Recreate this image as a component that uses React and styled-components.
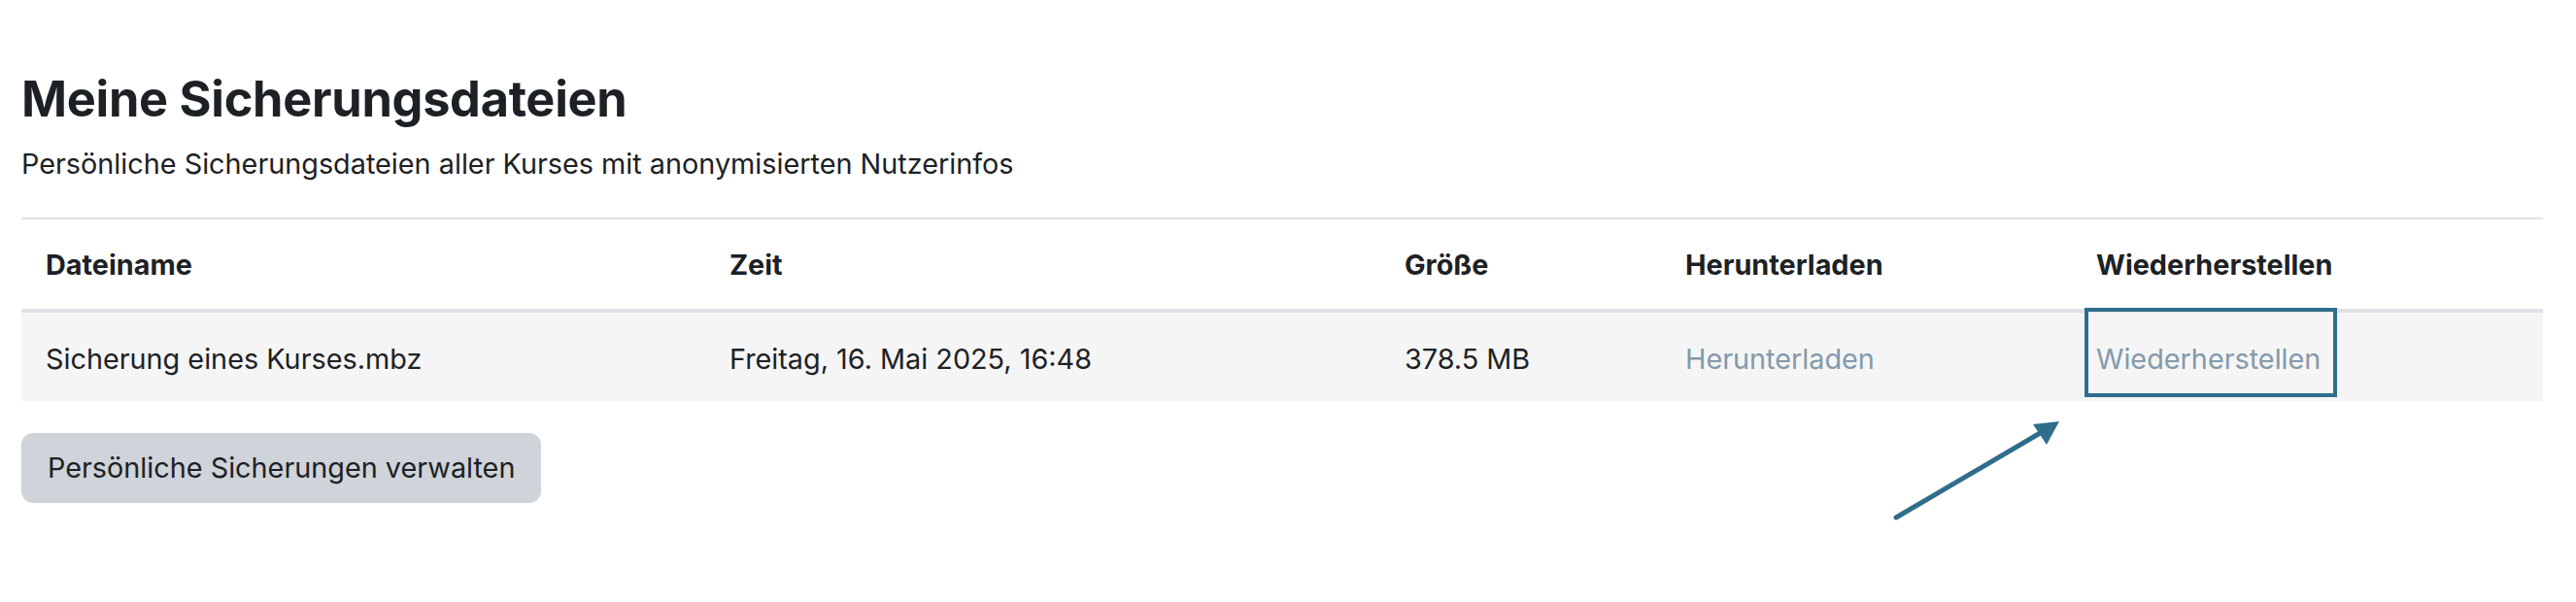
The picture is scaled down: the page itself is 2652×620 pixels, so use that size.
import React from "react";
import styled, { createGlobalStyle } from "styled-components";

const GlobalStyle = createGlobalStyle`
  body {
    margin: 0;
    background: #fff;
    font-family: Inter, "Noto Sans", "Liberation Sans", sans-serif;
    color: #1d2125;
  }
`;

const Page = styled.div`
  position: relative;
  padding: 72px 34px 0 22px;
  height: 620px;
  box-sizing: border-box;
`;

const Title = styled.h2`
  margin: 0 0 15px;
  font-size: 50.5px;
  line-height: 1.2;
  font-weight: 700;
  letter-spacing: -0.3px;
`;

const Subtitle = styled.p`
  margin: 0 0 34px;
  font-size: 28.8px;
  line-height: 42px;
`;

const Table = styled.table`
  width: 100%;
  border-collapse: collapse;
  table-layout: fixed;
  border-top: 2px solid #dee2e6;
  font-size: 28.8px;
  line-height: 42px;
`;

const Th = styled.th`
  width: ${({ $w }) => $w - 50}px;
  text-align: left;
  font-weight: 700;
  padding: 26px 25px 24px;
  border-bottom: 4px solid #dee2e6;
`;

const Row = styled.tr`
  background: #f5f5f5;
`;

const Td = styled.td`
  position: relative;
  padding: 27px 25px 22px;
  white-space: nowrap;
`;

const Link = styled.a`
  color: #8399ab;
  text-decoration: none;
`;

const Highlight = styled.span`
  position: absolute;
  left: 13px;
  top: -5px;
  width: 260px;
  height: 92px;
  box-sizing: border-box;
  border: 4px solid #306d8c;
  pointer-events: none;
`;

const Button = styled.button`
  margin-top: 33px;
  padding: 15px 27px;
  border: none;
  border-radius: 12px;
  background: #ced4da;
  color: #1d2125;
  font-family: inherit;
  font-size: 28.8px;
  line-height: 42px;
`;

const Arrow = styled.svg`
  position: absolute;
  left: 1940px;
  top: 425px;
`;

export default function App() {
  return (
    <>
      <GlobalStyle />
      <Page>
        <Title>Meine Sicherungsdateien</Title>
        <Subtitle>
          Persönliche Sicherungsdateien aller Kurses mit anonymisierten Nutzerinfos
        </Subtitle>
        <Table>
          <thead>
            <tr>
              <Th $w={704}>Dateiname</Th>
              <Th $w={695}>Zeit</Th>
              <Th $w={289}>Größe</Th>
              <Th $w={423}>Herunterladen</Th>
              <Th $w={485}>Wiederherstellen</Th>
            </tr>
          </thead>
          <tbody>
            <Row>
              <Td>Sicherung eines Kurses.mbz</Td>
              <Td>Freitag, 16. Mai 2025, 16:48</Td>
              <Td>378.5 MB</Td>
              <Td>
                <Link href="#">Herunterladen</Link>
              </Td>
              <Td>
                <Link href="#">Wiederherstellen</Link>
                <Highlight />
              </Td>
            </Row>
          </tbody>
        </Table>
        <Button>Persönliche Sicherungen verwalten</Button>
        <Arrow width="200" height="120" viewBox="0 0 200 120">
          <line x1="12" y1="108" x2="162" y2="20" stroke="#306d8c" strokeWidth="5" strokeLinecap="round" />
          <polygon points="180,9 153,12 167,33" fill="#306d8c" />
        </Arrow>
      </Page>
    </>
  );
}
